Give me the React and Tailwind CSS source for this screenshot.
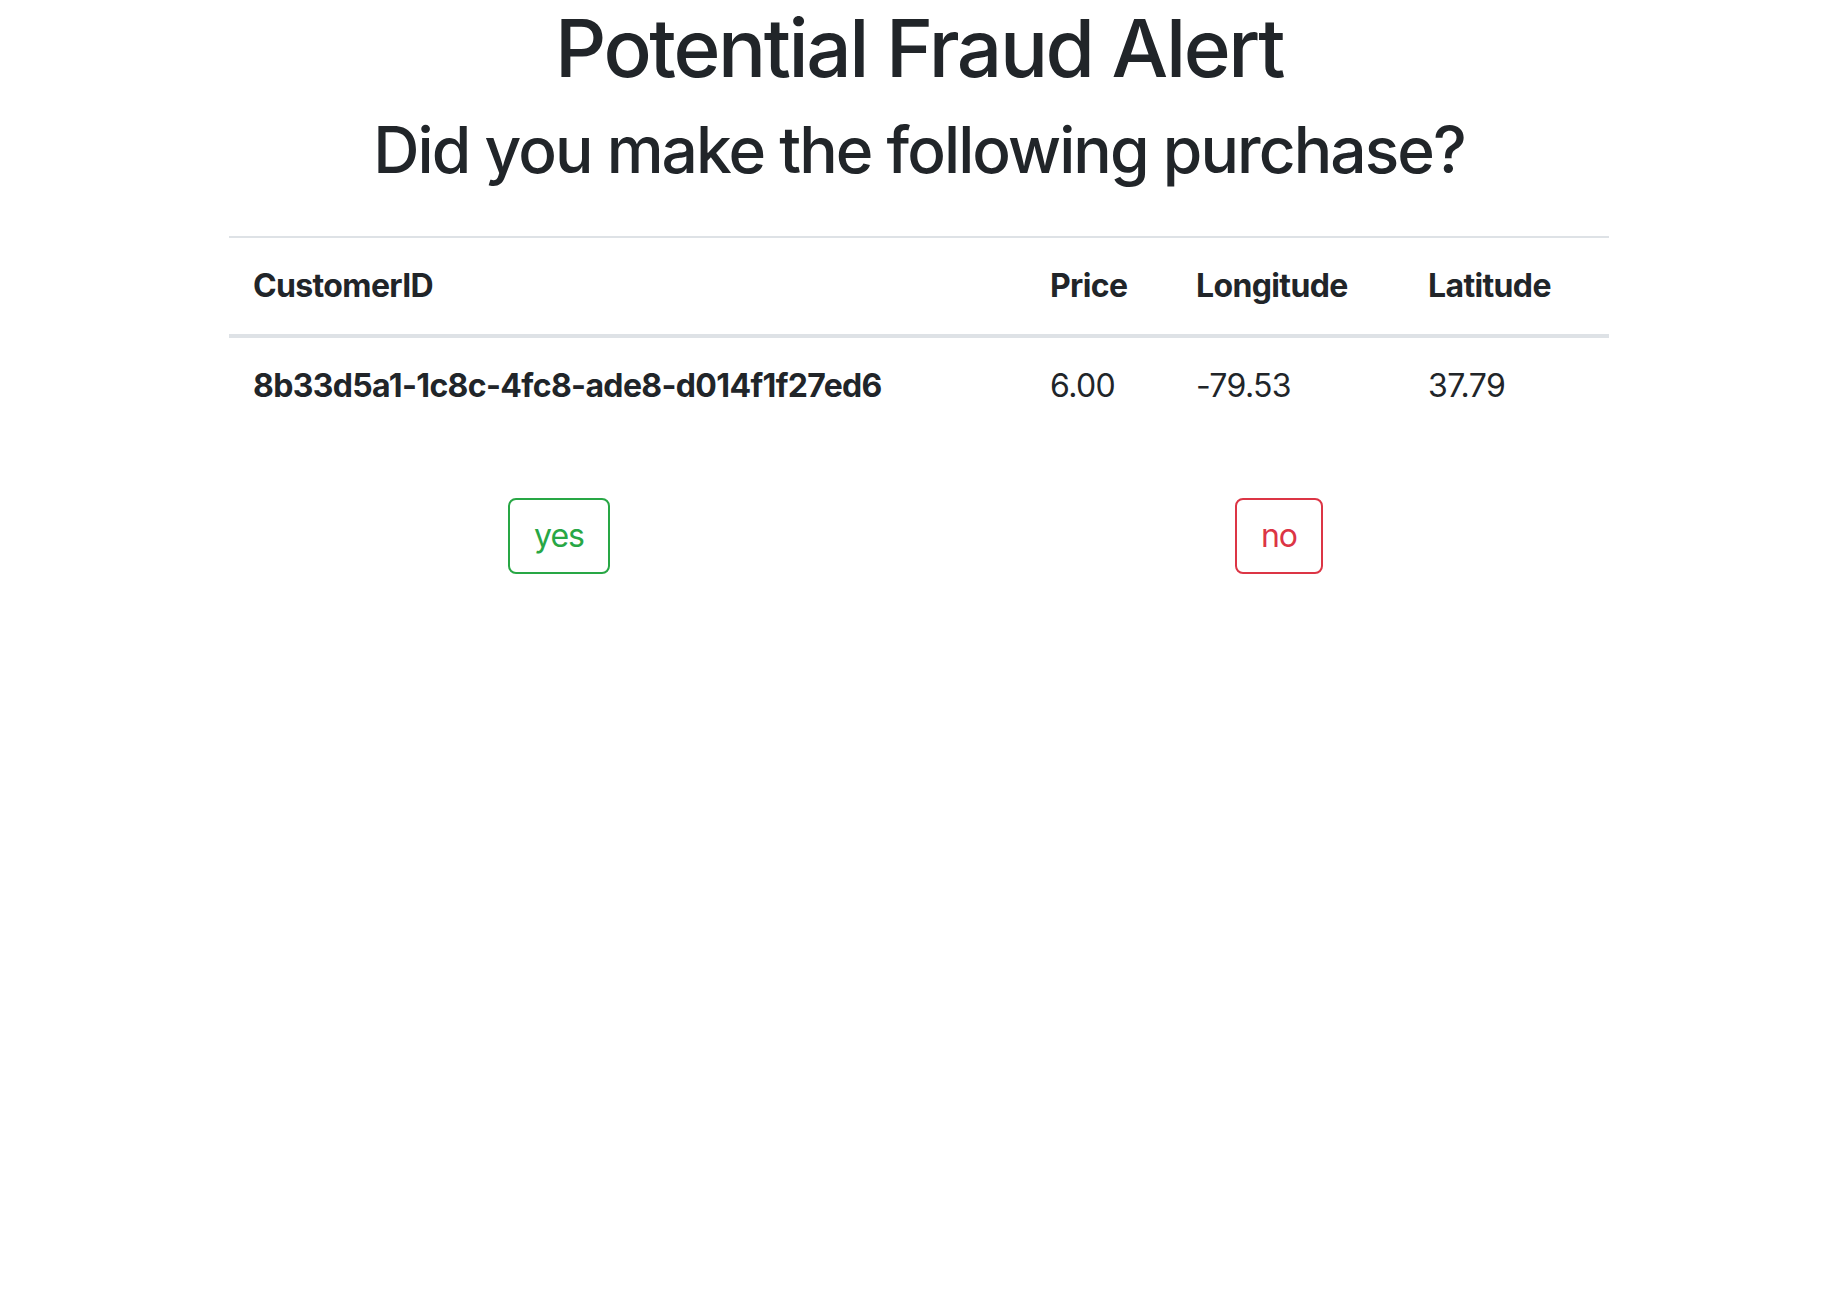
export default function App() {
  return (
    <div className="min-h-[1300px] w-full bg-white text-[#212529] [font-family:Inter,'Noto_Sans',sans-serif]">
      <div className="mx-auto w-[1440px]">
        <h1 className="mb-4 text-center text-[80px] font-medium leading-[1.2] tracking-[-0.03em]">Potential Fraud Alert</h1>
        <h2 className="mb-[47px] text-center text-[64px] font-medium leading-[1.2] tracking-[-0.03em]">Did you make the following purchase?</h2>
        <div className="px-[30px]">
          <table className="w-full border-collapse text-[32px] leading-[1.5] tracking-[-0.02em]">
            <thead>
              <tr>
                <th className="w-[797px] border-t-2 border-b-4 border-[#dee2e6] p-6 text-left align-bottom font-bold">CustomerID</th>
                <th className="w-[146px] border-t-2 border-b-4 border-[#dee2e6] p-6 text-left align-bottom font-bold">Price</th>
                <th className="w-[232px] border-t-2 border-b-4 border-[#dee2e6] p-6 text-left align-bottom font-bold">Longitude</th>
                <th className="w-[205px] border-t-2 border-b-4 border-[#dee2e6] p-6 text-left align-bottom font-bold">Latitude</th>
              </tr>
            </thead>
            <tbody>
              <tr>
                <th className="border-t-2 border-[#dee2e6] p-6 text-left align-top font-bold">8b33d5a1-1c8c-4fc8-ade8-d014f1f27ed6</th>
                <td className="border-t-2 border-[#dee2e6] p-6 align-top">6.00</td>
                <td className="border-t-2 border-[#dee2e6] p-6 align-top">-79.53</td>
                <td className="border-t-2 border-[#dee2e6] p-6 align-top">37.79</td>
              </tr>
            </tbody>
          </table>
        </div>
        <div className="mt-[64px] grid grid-cols-2">
          <div className="text-center">
            <button className="rounded-[8px] border-2 border-[#28a745] bg-white px-6 py-3 text-[32px] leading-[1.5] tracking-[-0.03em] text-[#28a745]">yes</button>
          </div>
          <div className="text-center">
            <button className="rounded-[8px] border-2 border-[#dc3545] bg-white px-6 py-3 text-[32px] leading-[1.5] tracking-[-0.03em] text-[#dc3545]">no</button>
          </div>
        </div>
      </div>
    </div>
  );
}
